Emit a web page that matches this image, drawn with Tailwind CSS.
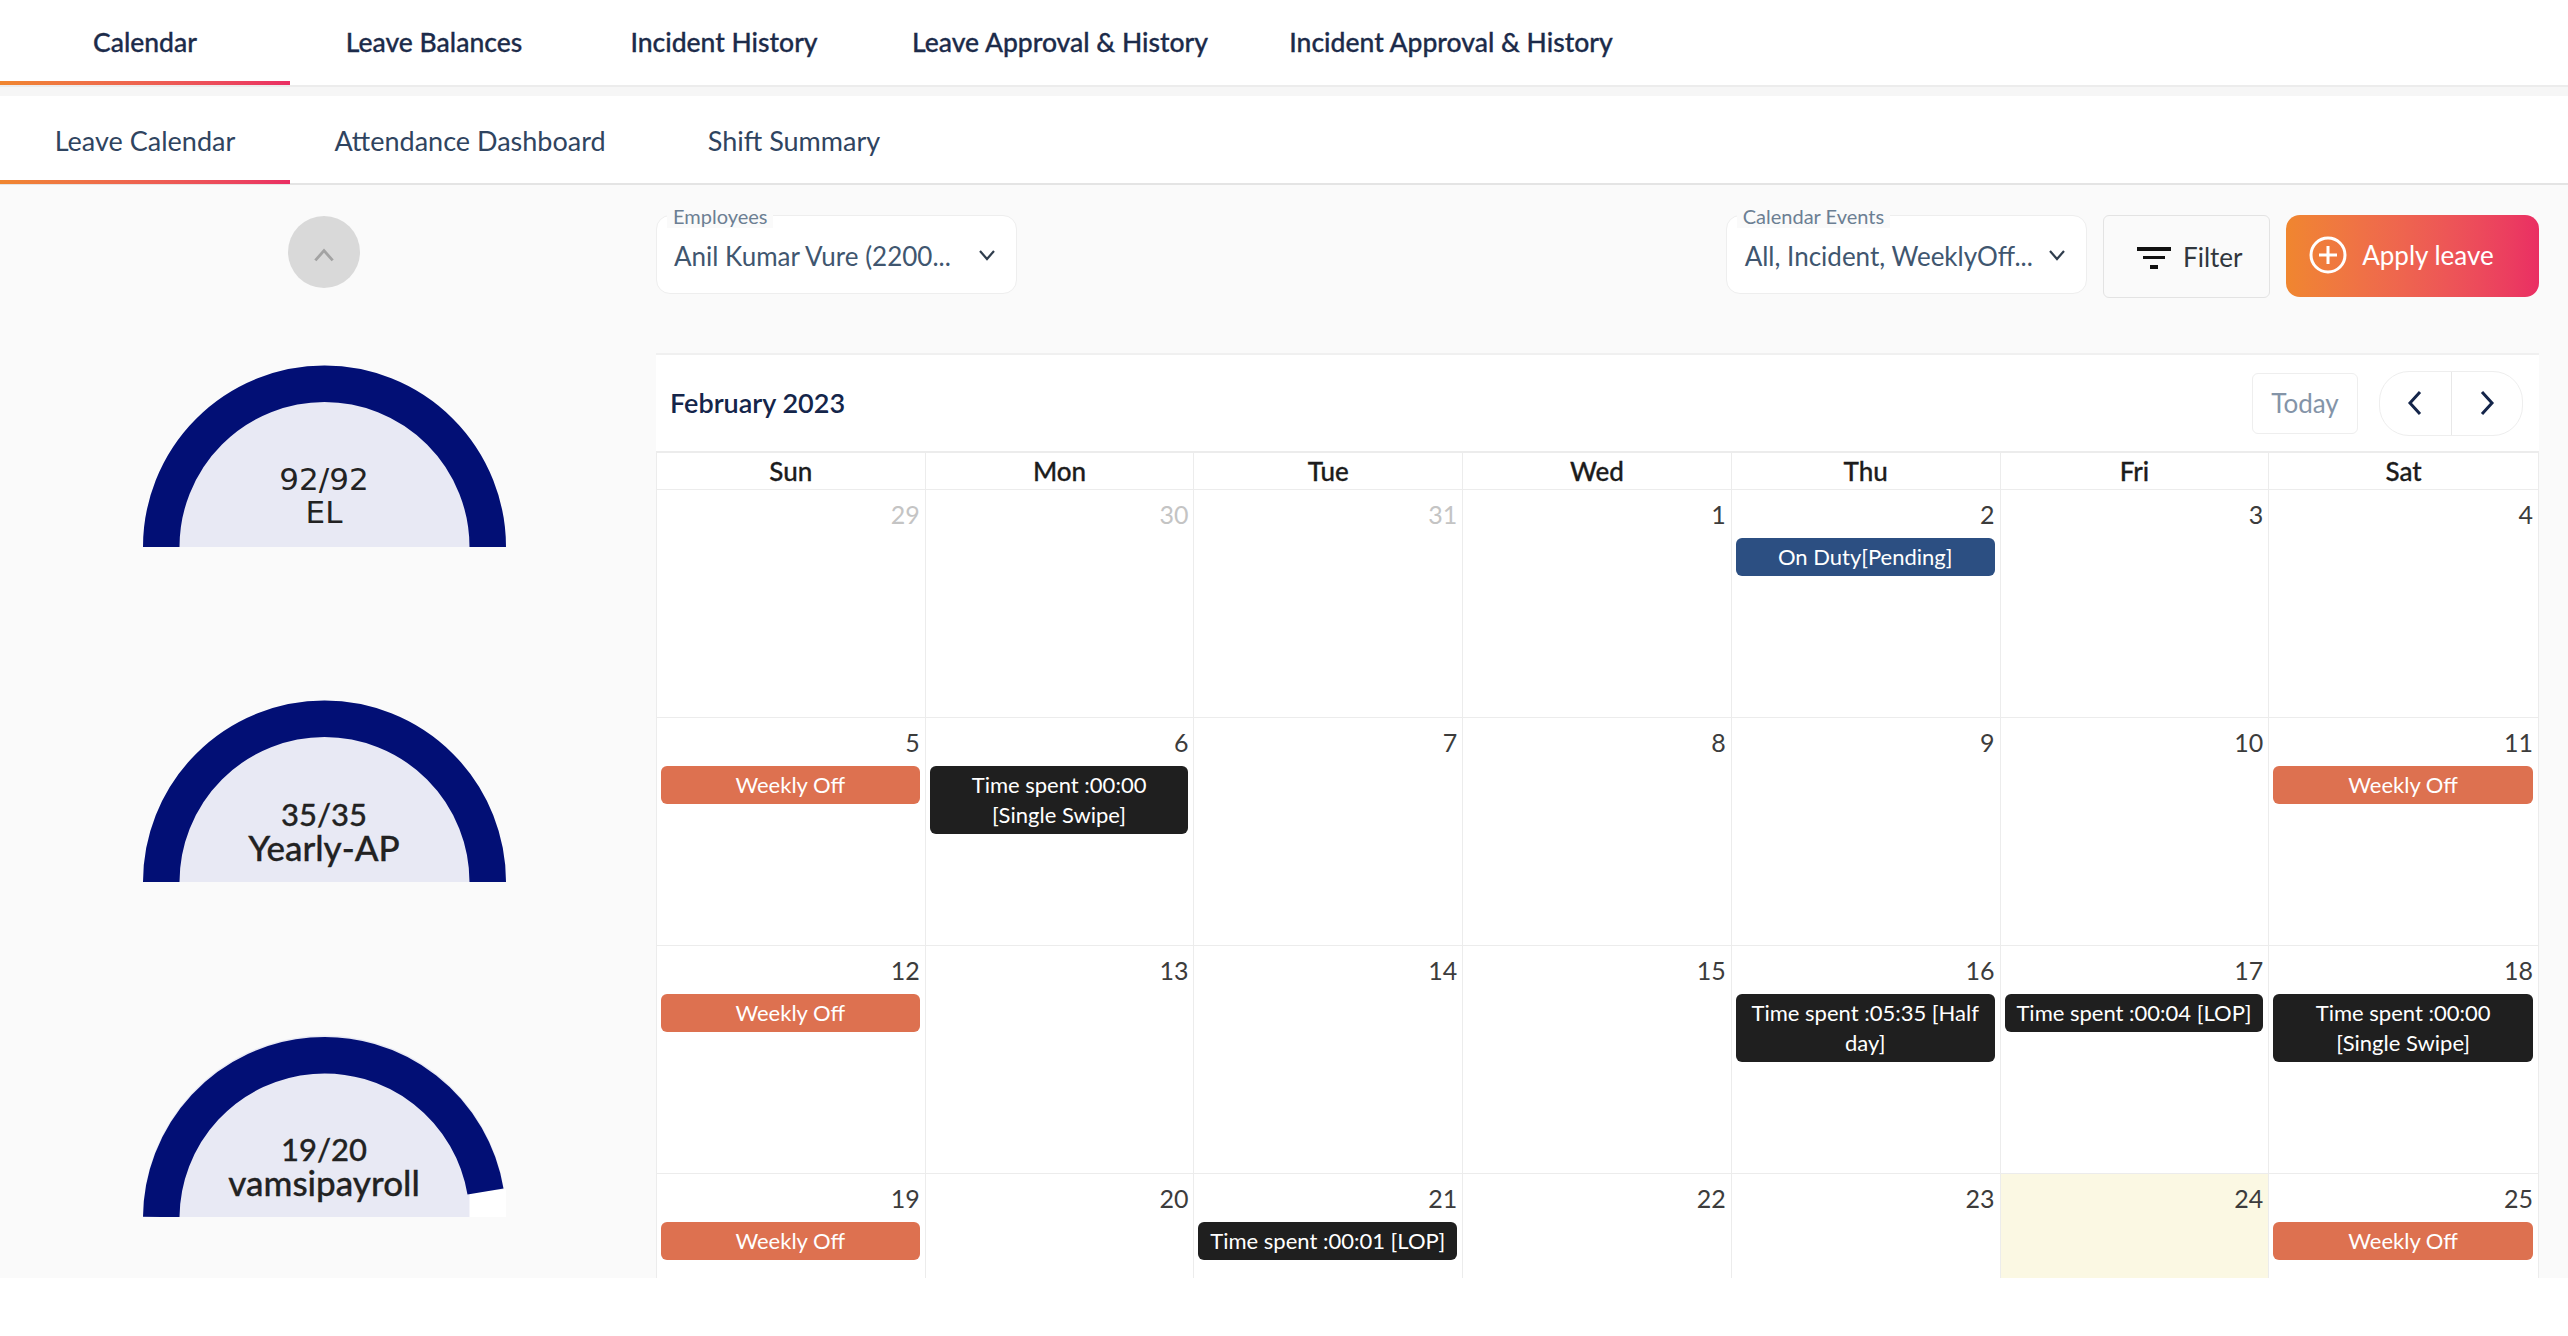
<!DOCTYPE html>
<html lang="en">
<head>
<meta charset="UTF-8">
<title>Leave Calendar</title>
<script src="https://cdn.jsdelivr.net/npm/@tailwindcss/browser@4"></script>
</head>
<body class="bg-white font-['Lato',sans-serif] overflow-hidden">
<div class="w-[2568px] h-[1336px] flex flex-col">

  <!--Top tabs-->
  <div class="h-[87px] flex border-b-2 border-[#ececec] text-[26.5px] font-medium text-[#1c2b4a] [-webkit-text-stroke:0.3px]">
    <div class="relative w-[290px] h-[85px] flex items-center justify-center">Calendar
      <div class="absolute left-0 right-0 bottom-0 h-[4px] bg-gradient-to-r from-[#f0862f] to-[#ea2e63]"></div>
    </div>
    <div class="w-[288px] flex items-center justify-center">Leave Balances</div>
    <div class="w-[292px] flex items-center justify-center">Incident History</div>
    <div class="w-[380px] flex items-center justify-center">Leave Approval &amp; History</div>
    <div class="w-[402px] flex items-center justify-center">Incident Approval &amp; History</div>
  </div>
  <div class="h-[9px] bg-[#f6f6f6]"></div>

  <!--Sub tabs-->
  <div class="h-[89px] flex border-b-2 border-[#e4e4e4] text-[27px] text-[#2f4460]">
    <div class="relative w-[290px] pt-[3px] flex items-center justify-center">Leave Calendar
      <div class="absolute left-0 right-0 bottom-[-1px] h-[4px] bg-gradient-to-r from-[#f0862f] to-[#ea2e63]"></div>
    </div>
    <div class="w-[360px] pt-[3px] flex items-center justify-center">Attendance Dashboard</div>
    <div class="w-[288px] pt-[3px] flex items-center justify-center">Shift Summary</div>
  </div>

  <!--Content-->
  <div class="h-[1093px] bg-[#fafafa] flex overflow-hidden">

    <!--Gauges-->
    <div class="w-[656px] shrink-0 flex flex-col items-center pt-[31px]">
      <div class="w-[72px] h-[72px] rounded-full bg-[#d9d9d9] flex items-center justify-center mr-[8px]">
        <svg class="mt-[6px]" width="26" height="26" viewBox="0 0 24 24" fill="none" stroke="#a3a3a3" stroke-width="2.6"><path d="M4 17 L12 8 L20 17"/></svg>
      </div>

      <div class="mt-[75px] mr-[8px] flex flex-col gap-[151px]">
        <div class="relative w-[363px] h-[184px]">
          <svg class="absolute inset-0" width="363" height="184" viewBox="0 0 363 184">
            <path d="M0 184 A181.5 181.5 0 0 1 363 184 Z" fill="#e8e9f4"/>
            <path d="M18.25 184 A163.25 163.25 0 0 1 344.75 184" fill="none" stroke="#020f75" stroke-width="36.5"/>
          </svg>
          <div class="absolute left-0 right-0 top-[100px] text-center font-['DejaVu_Sans',sans-serif] text-[#222] text-[31px] leading-[33px]">92/92<br>EL</div>
        </div>
        <div class="relative w-[363px] h-[184px]">
          <svg class="absolute inset-0" width="363" height="184" viewBox="0 0 363 184">
            <path d="M0 184 A181.5 181.5 0 0 1 363 184 Z" fill="#e8e9f4"/>
            <path d="M18.25 184 A163.25 163.25 0 0 1 344.75 184" fill="none" stroke="#020f75" stroke-width="36.5"/>
          </svg>
          <div class="absolute left-0 right-0 top-[100px] text-center font-medium text-[#222] leading-[33px] [-webkit-text-stroke:0.3px]"><div class="text-[31px]">35/35</div><div class="text-[35px]">Yearly-AP</div></div>
        </div>
        <div class="relative w-[363px] h-[184px]">
          <svg class="absolute inset-0" width="363" height="184" viewBox="0 0 363 184">
            <path d="M0 184 A181.5 181.5 0 0 1 363 184 Z" fill="#e8e9f4"/>
            <path d="M326.5 184 L363 184 L363 156 L326.5 160 Z" fill="#fff"/>
            <path d="M18.25 184 A163.25 163.25 0 0 1 342.5 158.5" fill="none" stroke="#020f75" stroke-width="36.5"/>
          </svg>
          <div class="absolute left-0 right-0 top-[100px] text-center font-medium text-[#222] leading-[33px] [-webkit-text-stroke:0.3px]"><div class="text-[31px]">19/20</div><div class="text-[35px]">vamsipayroll</div></div>
        </div>
      </div>
    </div>

    <!--Main column-->
    <div class="w-[1883px] shrink-0 flex flex-col">

      <!--Filters-->
      <div class="h-[168px] pt-[30px] flex items-start">
        <div class="relative w-[361px] h-[79px] bg-white rounded-[14px] border border-[#eeeeee] flex items-center justify-between pl-[17px] pr-[20px]">
          <span class="absolute left-[10px] top-[-12px] px-[6px] bg-[#fafafa] text-[20px] leading-[24px] text-[#6c7f93]">Employees</span>
          <span class="text-[26px] text-[#40566f] mt-[4px]">Anil Kumar Vure (2200...</span>
          <svg width="18" height="12" viewBox="0 0 18 12" fill="none" stroke="#2f3d4d" stroke-width="2.2"><path d="M2 2 L9 10 L16 2"/></svg>
        </div>
        <div class="relative ml-[709px] w-[362px] h-[79px] bg-white rounded-[14px] border border-[#eeeeee] flex items-center justify-between pl-[18px] pr-[20px]">
          <span class="absolute left-[10px] top-[-12px] px-[6px] bg-[#fafafa] text-[20px] leading-[24px] text-[#6c7f93]">Calendar Events</span>
          <span class="text-[26px] text-[#40566f] mt-[4px]">All, Incident, WeeklyOff...</span>
          <svg width="18" height="12" viewBox="0 0 18 12" fill="none" stroke="#2f3d4d" stroke-width="2.2"><path d="M2 2 L9 10 L16 2"/></svg>
        </div>
        <div class="ml-[16px] w-[167px] h-[83px] rounded-[6px] border border-[#e3e3e3] bg-[#fafafa] flex items-center justify-center gap-[12px] pl-[6px] pt-[2px] text-[26px] text-[#30363d]">
          <svg width="34" height="24" viewBox="0 0 34 24" fill="#111"><rect x="0" y="1" width="34" height="4"/><rect x="6" y="10" width="22" height="3"/><rect x="13" y="19" width="8" height="4"/></svg>
          Filter
        </div>
        <div class="ml-[16px] w-[253px] h-[82px] rounded-[14px] bg-gradient-to-r from-[#f0862f] to-[#ea2e63] flex items-center pl-[23px] pb-[2px] gap-[15px] text-[26px] text-white">
          <svg width="38" height="38" viewBox="0 0 38 38" fill="none" stroke="#fff" stroke-width="3"><circle cx="19" cy="19" r="17"/><path d="M19 10 V28 M10 19 H28"/></svg>
          Apply leave
        </div>
      </div>

      <!--Calendar card-->
      <div class="flex-1 bg-white border-t-2 border-[#f0f0f0] flex flex-col overflow-hidden">
        <div class="h-[96px] flex items-center justify-between pl-[14px] pr-[16px] shrink-0">
          <span class="text-[27px] font-semibold text-[#14254a]">February 2023</span>
          <div class="flex items-center gap-[21px]">
            <div class="w-[106px] h-[61px] rounded-[6px] border border-[#eeeeee] flex items-center justify-center text-[26px] text-[#8494a8]">Today</div>
            <div class="w-[144px] h-[65px] rounded-[30px] border border-[#eeeeee] flex">
              <div class="flex-1 flex items-center justify-center border-r border-[#e8e8e8]">
                <svg width="16" height="26" viewBox="0 0 16 26" fill="none" stroke="#14254a" stroke-width="3"><path d="M13 2 L3 13 L13 24"/></svg>
              </div>
              <div class="flex-1 flex items-center justify-center">
                <svg width="16" height="26" viewBox="0 0 16 26" fill="none" stroke="#14254a" stroke-width="3"><path d="M3 2 L13 13 L3 24"/></svg>
              </div>
            </div>
          </div>
        </div>

        <!--Calendar grid-->
        <div class="grid grid-cols-7 grid-rows-[37px_228px_228px_228px_228px] border-t-2 border-l border-r border-[#ececec] text-[#3c3c3c] text-[25px] leading-[40px] text-right">
          <div class="border-r border-b border-[#ececec] flex items-center justify-center text-[26px] font-medium text-[#1c1c1c] [-webkit-text-stroke:0.3px]">Sun</div>
          <div class="border-r border-b border-[#ececec] flex items-center justify-center text-[26px] font-medium text-[#1c1c1c] [-webkit-text-stroke:0.3px]">Mon</div>
          <div class="border-r border-b border-[#ececec] flex items-center justify-center text-[26px] font-medium text-[#1c1c1c] [-webkit-text-stroke:0.3px]">Tue</div>
          <div class="border-r border-b border-[#ececec] flex items-center justify-center text-[26px] font-medium text-[#1c1c1c] [-webkit-text-stroke:0.3px]">Wed</div>
          <div class="border-r border-b border-[#ececec] flex items-center justify-center text-[26px] font-medium text-[#1c1c1c] [-webkit-text-stroke:0.3px]">Thu</div>
          <div class="border-r border-b border-[#ececec] flex items-center justify-center text-[26px] font-medium text-[#1c1c1c] [-webkit-text-stroke:0.3px]">Fri</div>
          <div class="border-b border-[#ececec] flex items-center justify-center text-[26px] font-medium text-[#1c1c1c] [-webkit-text-stroke:0.3px]">Sat</div>

          <!--Week 1-->
          <div class="border-r border-b border-[#ececec] pl-[4px] pr-[5px] py-[4px]"><div class="h-[44px] text-[#c4c4c4]">29</div></div>
          <div class="border-r border-b border-[#ececec] pl-[4px] pr-[5px] py-[4px]"><div class="h-[44px] text-[#c4c4c4]">30</div></div>
          <div class="border-r border-b border-[#ececec] pl-[4px] pr-[5px] py-[4px]"><div class="h-[44px] text-[#c4c4c4]">31</div></div>
          <div class="border-r border-b border-[#ececec] pl-[4px] pr-[5px] py-[4px]"><div class="h-[44px]">1</div></div>
          <div class="border-r border-b border-[#ececec] pl-[4px] pr-[5px] py-[4px]"><div class="h-[44px]">2</div>
            <div class="rounded-[6px] bg-[#2c4f82] text-white text-center text-[22px] leading-[30px] py-[4px]">On Duty[Pending]</div></div>
          <div class="border-r border-b border-[#ececec] pl-[4px] pr-[5px] py-[4px]"><div class="h-[44px]">3</div></div>
          <div class="border-b border-[#ececec] pl-[4px] pr-[5px] py-[4px]"><div class="h-[44px]">4</div></div>

          <!--Week 2-->
          <div class="border-r border-b border-[#ececec] pl-[4px] pr-[5px] py-[4px]"><div class="h-[44px]">5</div>
            <div class="rounded-[6px] bg-[#dd7150] text-white text-center text-[22px] leading-[30px] py-[4px]">Weekly Off</div></div>
          <div class="border-r border-b border-[#ececec] pl-[4px] pr-[5px] py-[4px]"><div class="h-[44px]">6</div>
            <div class="rounded-[6px] bg-[#1f1f1f] text-white text-center text-[22px] leading-[30px] py-[4px]">Time spent :00:00<br>[Single Swipe]</div></div>
          <div class="border-r border-b border-[#ececec] pl-[4px] pr-[5px] py-[4px]"><div class="h-[44px]">7</div></div>
          <div class="border-r border-b border-[#ececec] pl-[4px] pr-[5px] py-[4px]"><div class="h-[44px]">8</div></div>
          <div class="border-r border-b border-[#ececec] pl-[4px] pr-[5px] py-[4px]"><div class="h-[44px]">9</div></div>
          <div class="border-r border-b border-[#ececec] pl-[4px] pr-[5px] py-[4px]"><div class="h-[44px]">10</div></div>
          <div class="border-b border-[#ececec] pl-[4px] pr-[5px] py-[4px]"><div class="h-[44px]">11</div>
            <div class="rounded-[6px] bg-[#dd7150] text-white text-center text-[22px] leading-[30px] py-[4px]">Weekly Off</div></div>

          <!--Week 3-->
          <div class="border-r border-b border-[#ececec] pl-[4px] pr-[5px] py-[4px]"><div class="h-[44px]">12</div>
            <div class="rounded-[6px] bg-[#dd7150] text-white text-center text-[22px] leading-[30px] py-[4px]">Weekly Off</div></div>
          <div class="border-r border-b border-[#ececec] pl-[4px] pr-[5px] py-[4px]"><div class="h-[44px]">13</div></div>
          <div class="border-r border-b border-[#ececec] pl-[4px] pr-[5px] py-[4px]"><div class="h-[44px]">14</div></div>
          <div class="border-r border-b border-[#ececec] pl-[4px] pr-[5px] py-[4px]"><div class="h-[44px]">15</div></div>
          <div class="border-r border-b border-[#ececec] pl-[4px] pr-[5px] py-[4px]"><div class="h-[44px]">16</div>
            <div class="rounded-[6px] bg-[#1f1f1f] text-white text-center text-[22px] leading-[30px] py-[4px]">Time spent :05:35 [Half day]</div></div>
          <div class="border-r border-b border-[#ececec] pl-[4px] pr-[5px] py-[4px]"><div class="h-[44px]">17</div>
            <div class="rounded-[6px] bg-[#1f1f1f] text-white text-center text-[22px] leading-[30px] py-[4px]">Time spent :00:04 [LOP]</div></div>
          <div class="border-b border-[#ececec] pl-[4px] pr-[5px] py-[4px]"><div class="h-[44px]">18</div>
            <div class="rounded-[6px] bg-[#1f1f1f] text-white text-center text-[22px] leading-[30px] py-[4px]">Time spent :00:00<br>[Single Swipe]</div></div>

          <!--Week 4-->
          <div class="border-r border-[#ececec] pl-[4px] pr-[5px] py-[4px]"><div class="h-[44px]">19</div>
            <div class="rounded-[6px] bg-[#dd7150] text-white text-center text-[22px] leading-[30px] py-[4px]">Weekly Off</div></div>
          <div class="border-r border-[#ececec] pl-[4px] pr-[5px] py-[4px]"><div class="h-[44px]">20</div></div>
          <div class="border-r border-[#ececec] pl-[4px] pr-[5px] py-[4px]"><div class="h-[44px]">21</div>
            <div class="rounded-[6px] bg-[#1f1f1f] text-white text-center text-[22px] leading-[30px] py-[4px]">Time spent :00:01 [LOP]</div></div>
          <div class="border-r border-[#ececec] pl-[4px] pr-[5px] py-[4px]"><div class="h-[44px]">22</div></div>
          <div class="border-r border-[#ececec] pl-[4px] pr-[5px] py-[4px]"><div class="h-[44px]">23</div></div>
          <div class="border-r border-[#ececec] pl-[4px] pr-[5px] py-[4px] bg-[#fbf8e3]"><div class="h-[44px]">24</div></div>
          <div class="pl-[4px] pr-[5px] py-[4px]"><div class="h-[44px]">25</div>
            <div class="rounded-[6px] bg-[#dd7150] text-white text-center text-[22px] leading-[30px] py-[4px]">Weekly Off</div></div>
        </div>
      </div>
    </div>
    <div class="flex-1"></div>
  </div>
  <div class="flex-1 bg-white"></div>
</div>
</body>
</html>
